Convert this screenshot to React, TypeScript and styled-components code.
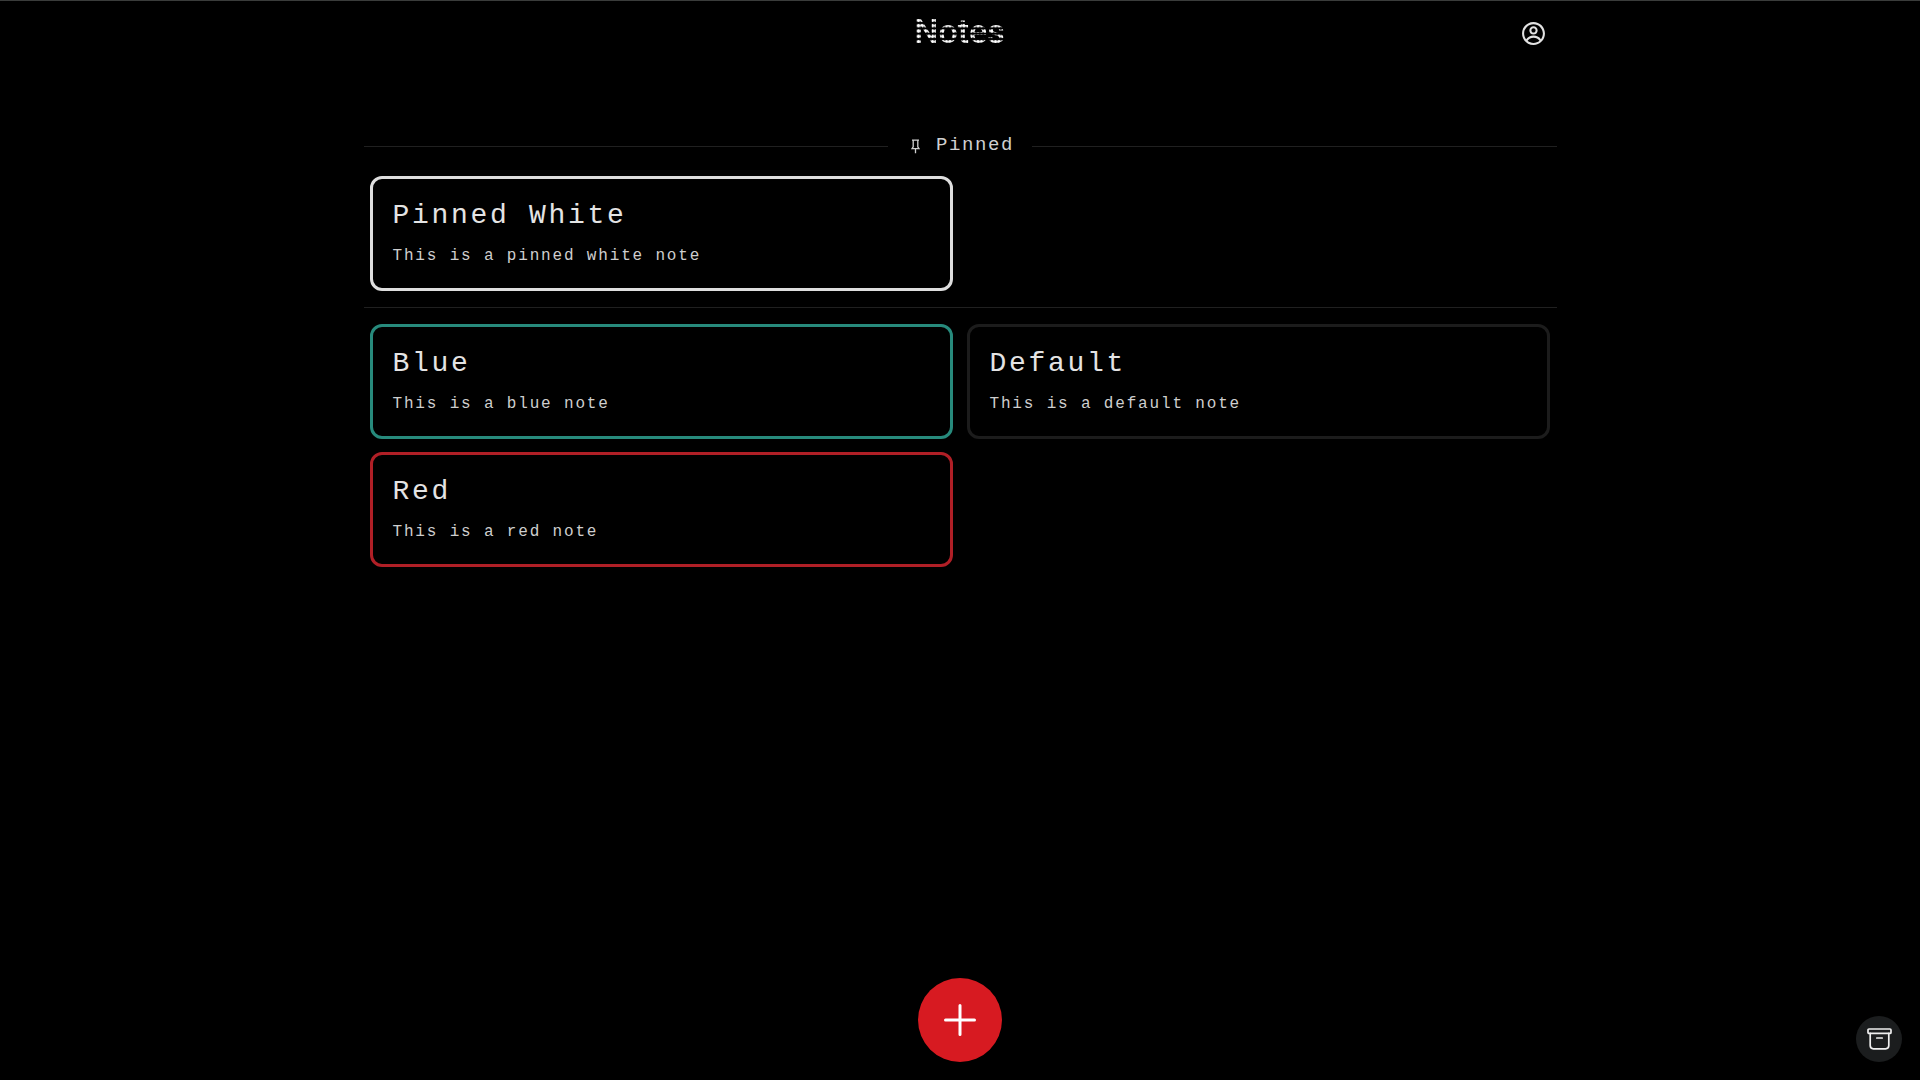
import React from "react";
import styled, { createGlobalStyle } from "styled-components";
import { CgProfile } from "react-icons/cg";

const GlobalStyle = createGlobalStyle`
  *, *::before, *::after { box-sizing: border-box; }
  body {
    margin: 0;
    background: #000;
    color: #e6e6e6;
    font-family: "Liberation Mono", "Courier New", monospace;
    overflow: hidden;
  }
`;

const Page = styled.div`
  display: flex;
  flex-direction: column;
  align-items: center;
  height: 100vh;
  border-top: 1px solid #3a3c3b;
`;

const Header = styled.header`
  display: grid;
  grid-template-columns: 1fr auto 1fr;
  align-items: center;
  width: 1193px;
  height: 64px;
`;

const Title = styled.h1`
  grid-column: 2;
  margin: 0 1px 5px 0;
  font: 500 34px/42px Roboto, sans-serif;
  letter-spacing: 0;
  color: transparent;
  background: radial-gradient(circle at center, #fff 1.3px, #0000 2.2px) 2.75px 2.3px / 3.5px 5.35px;
  -webkit-background-clip: text;
  background-clip: text;
`;

const AccountButton = styled.button`
  display: flex;
  justify-self: end;
  margin-right: 11px;
  padding: 0;
  border: 0;
  background: none;
  color: #e2e2e2;
  font-size: 25px;
`;

const Main = styled.main`
  display: flex;
  flex-direction: column;
  width: 1193px;
  padding-top: 62px;
`;

const SectionDivider = styled.div`
  display: grid;
  grid-template-columns: 1fr 144px 1fr;
  align-items: center;
  height: 38px;
  margin-bottom: 11px;
  &::before, &::after {
    content: "";
    height: 1px;
    background: #202020;
  }
`;

const SectionLabel = styled.div`
  display: flex;
  align-items: center;
  justify-content: center;
  gap: 16px;
  padding: 0 0 3px 5px;
  color: #d0d0d0;
  font-size: 19px;
  line-height: 24px;
  letter-spacing: 1.6px;
  svg { margin-top: 3px; }
`;

const Rule = styled.hr`
  width: 100%;
  height: 1px;
  margin: 16px 0;
  border: 0;
  background: #202020;
`;

const NoteGrid = styled.section`
  display: grid;
  grid-template-columns: 583px 583px;
  gap: 13px 14px;
  padding: 0 6px;
`;

const Note = styled.article<{ $accent: string }>`
  height: 115px;
  padding: 20px;
  border: 3px solid ${(p) => p.$accent};
  border-radius: 12px;
`;

const NoteTitle = styled.h2`
  margin: 0;
  color: #e4e4e4;
  font-size: 28px;
  font-weight: 400;
  line-height: 34px;
  letter-spacing: 2.7px;
`;

const NoteText = styled.p`
  margin: 13px 0 0;
  color: #cecece;
  font-size: 16px;
  line-height: 20px;
  letter-spacing: 1.83px;
`;

const AddButton = styled.button`
  position: fixed;
  bottom: 18px;
  left: 50%;
  display: grid;
  place-items: center;
  width: 84px;
  height: 84px;
  padding: 0;
  border: 0;
  border-radius: 50%;
  background: #d71a21;
  color: #fff;
  transform: translateX(-50%);
`;

const ArchiveButton = styled.button`
  position: fixed;
  right: 18px;
  bottom: 18px;
  display: grid;
  place-items: center;
  width: 46px;
  height: 46px;
  padding: 0;
  border: 0;
  border-radius: 50%;
  background: #1b1d1e;
  color: #eee;
`;

type NoteData = { title: string; text: string; accent: string };

const pinned: NoteData[] = [
  { title: "Pinned White", text: "This is a pinned white note", accent: "#dedede" },
];

const notes: NoteData[] = [
  { title: "Blue", text: "This is a blue note", accent: "#278a7c" },
  { title: "Default", text: "This is a default note", accent: "#1c1c1c" },
  { title: "Red", text: "This is a red note", accent: "#b01f26" },
];

const PinIcon = () => (
  <svg width="9" height="15" viewBox="0 0 9 15" fill="none" stroke="currentColor" strokeWidth="1.3">
    <path d="M1 1.2h7M2.2 1.2v6.6L1 9.6h7L6.8 7.8V1.2M4.5 9.6v4.6" />
  </svg>
);

const PlusIcon = () => (
  <svg width="34" height="34" viewBox="0 0 34 34" stroke="currentColor" strokeWidth="3" strokeLinecap="round">
    <path d="M17 2.5v29M2.5 17h29" />
  </svg>
);

const ArchiveIcon = () => (
  <svg width="25" height="22" viewBox="0 0 25 22" fill="none" stroke="currentColor" strokeWidth="1.7" strokeLinecap="round" strokeLinejoin="round">
    <rect x="1" y="1" width="23" height="4.4" rx="1" />
    <path d="M3.2 5.4v12.2a3.2 3.2 0 0 0 3.2 3.2h12.2a3.2 3.2 0 0 0 3.2-3.2V5.4M9.8 10h5.4" />
  </svg>
);

const NoteList = ({ items }: { items: NoteData[] }) => (
  <NoteGrid>
    {items.map((n) => (
      <Note key={n.title} $accent={n.accent}>
        <NoteTitle>{n.title}</NoteTitle>
        <NoteText>{n.text}</NoteText>
      </Note>
    ))}
  </NoteGrid>
);

export default function App() {
  return (
    <Page>
      <GlobalStyle />
      <Header>
        <Title>Notes</Title>
        <AccountButton aria-label="Account"><CgProfile /></AccountButton>
      </Header>
      <Main>
        <SectionDivider>
          <SectionLabel><PinIcon />Pinned</SectionLabel>
        </SectionDivider>
        <NoteList items={pinned} />
        <Rule />
        <NoteList items={notes} />
      </Main>
      <AddButton aria-label="Add note"><PlusIcon /></AddButton>
      <ArchiveButton aria-label="Archive"><ArchiveIcon /></ArchiveButton>
    </Page>
  );
}
